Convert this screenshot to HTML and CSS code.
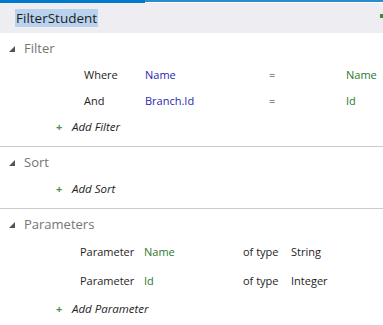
FILE: index.html
```html
<!DOCTYPE html>
<html>
<head>
    <title>FilterStudent</title>
    <link rel="stylesheet" href="styles.css">
</head>
<body>
    <div class="topline">
        <div class="topline-active"></div>
        <div class="topline-rest"></div>
    </div>
    <div class="titlebar">
        <span class="title">FilterStudent</span>
        <span class="status-dot"></span>
    </div>

    <div class="section">
        <div class="section-header">
            <svg class="expander" width="6" height="6" viewBox="0 0 6 6"><polygon points="6,0 6,6 0,6"/></svg>
            <span>Filter</span>
        </div>
        <div class="filter-row">
            <span class="keyword">Where</span>
            <span class="field">Name</span>
            <span class="op">=</span>
            <span class="param">Name</span>
        </div>
        <div class="filter-row">
            <span class="keyword">And</span>
            <span class="field">Branch.Id</span>
            <span class="op">=</span>
            <span class="param">Id</span>
        </div>
        <div class="add-row"><span class="plus">+</span><span class="add-text">Add Filter</span></div>
    </div>

    <div class="section">
        <div class="section-header">
            <svg class="expander" width="6" height="6" viewBox="0 0 6 6"><polygon points="6,0 6,6 0,6"/></svg>
            <span>Sort</span>
        </div>
        <div class="add-row"><span class="plus">+</span><span class="add-text">Add Sort</span></div>
    </div>

    <div class="section last">
        <div class="section-header">
            <svg class="expander" width="6" height="6" viewBox="0 0 6 6"><polygon points="6,0 6,6 0,6"/></svg>
            <span>Parameters</span>
        </div>
        <div class="param-row">
            <span class="keyword">Parameter</span>
            <span class="param">Name</span>
            <span class="keyword">of type</span>
            <span class="keyword">String</span>
        </div>
        <div class="param-row">
            <span class="keyword">Parameter</span>
            <span class="param">Id</span>
            <span class="keyword">of type</span>
            <span class="keyword">Integer</span>
        </div>
        <div class="add-row"><span class="plus">+</span><span class="add-text">Add Parameter</span></div>
    </div>
</body>
</html>
```

FILE: styles.css
```css
body {
    margin: 0;
    background-color: #fff;
    font-family: "Open Sans", "Noto Sans", sans-serif;
    font-size: 11px;
    color: #1e1e1e;
}
.topline {
    display: flex;
    align-items: flex-start;
}
.topline-active {
    width: 145px;
    height: 3px;
    background-color: #007acc;
}
.topline-rest {
    flex: 1;
    height: 2px;
    background-color: #2b8ccf;
}
.titlebar {
    display: flex;
    align-items: center;
    justify-content: space-between;
    height: 30px;
    padding-left: 15px;
    background-color: #eeeef2;
}
.title {
    font-size: 13.5px;
    color: #1e1e1e;
    background-color: #b9d3ee;
    padding: 0 1px;
    line-height: 18px;
}
.status-dot {
    width: 3px;
    height: 4px;
    background-color: #3d8b3d;
    margin-bottom: 4px;
}
.section {
    padding-bottom: 7px;
    border-bottom: 1px solid #cccccc;
}
.section.last {
    border-bottom: none;
}
.section-header {
    display: flex;
    align-items: center;
    height: 26px;
    padding-top: 2px;
    padding-left: 9px;
    font-size: 13px;
    color: #757575;
}
.expander {
    fill: #555;
    margin-right: 9px;
    margin-top: 2px;
}
.filter-row {
    display: grid;
    grid-template-columns: 61px 124px 77px auto;
    align-items: center;
    height: 26px;
    padding-left: 84px;
}
.param-row {
    display: grid;
    grid-template-columns: 64px 99px 48px auto;
    align-items: center;
    height: 29px;
    padding-left: 80px;
}
.field {
    color: #1f1fb0;
}
.param {
    color: #2a7a2a;
}
.add-row {
    display: flex;
    align-items: center;
    height: 26px;
    padding-left: 56px;
}
.plus {
    width: 16px;
    color: #4a944a;
    font-weight: bold;
    font-size: 11px;
}
.add-text {
    font-style: italic;
    font-size: 11.5px;
    color: #1e1e1e;
}
```
